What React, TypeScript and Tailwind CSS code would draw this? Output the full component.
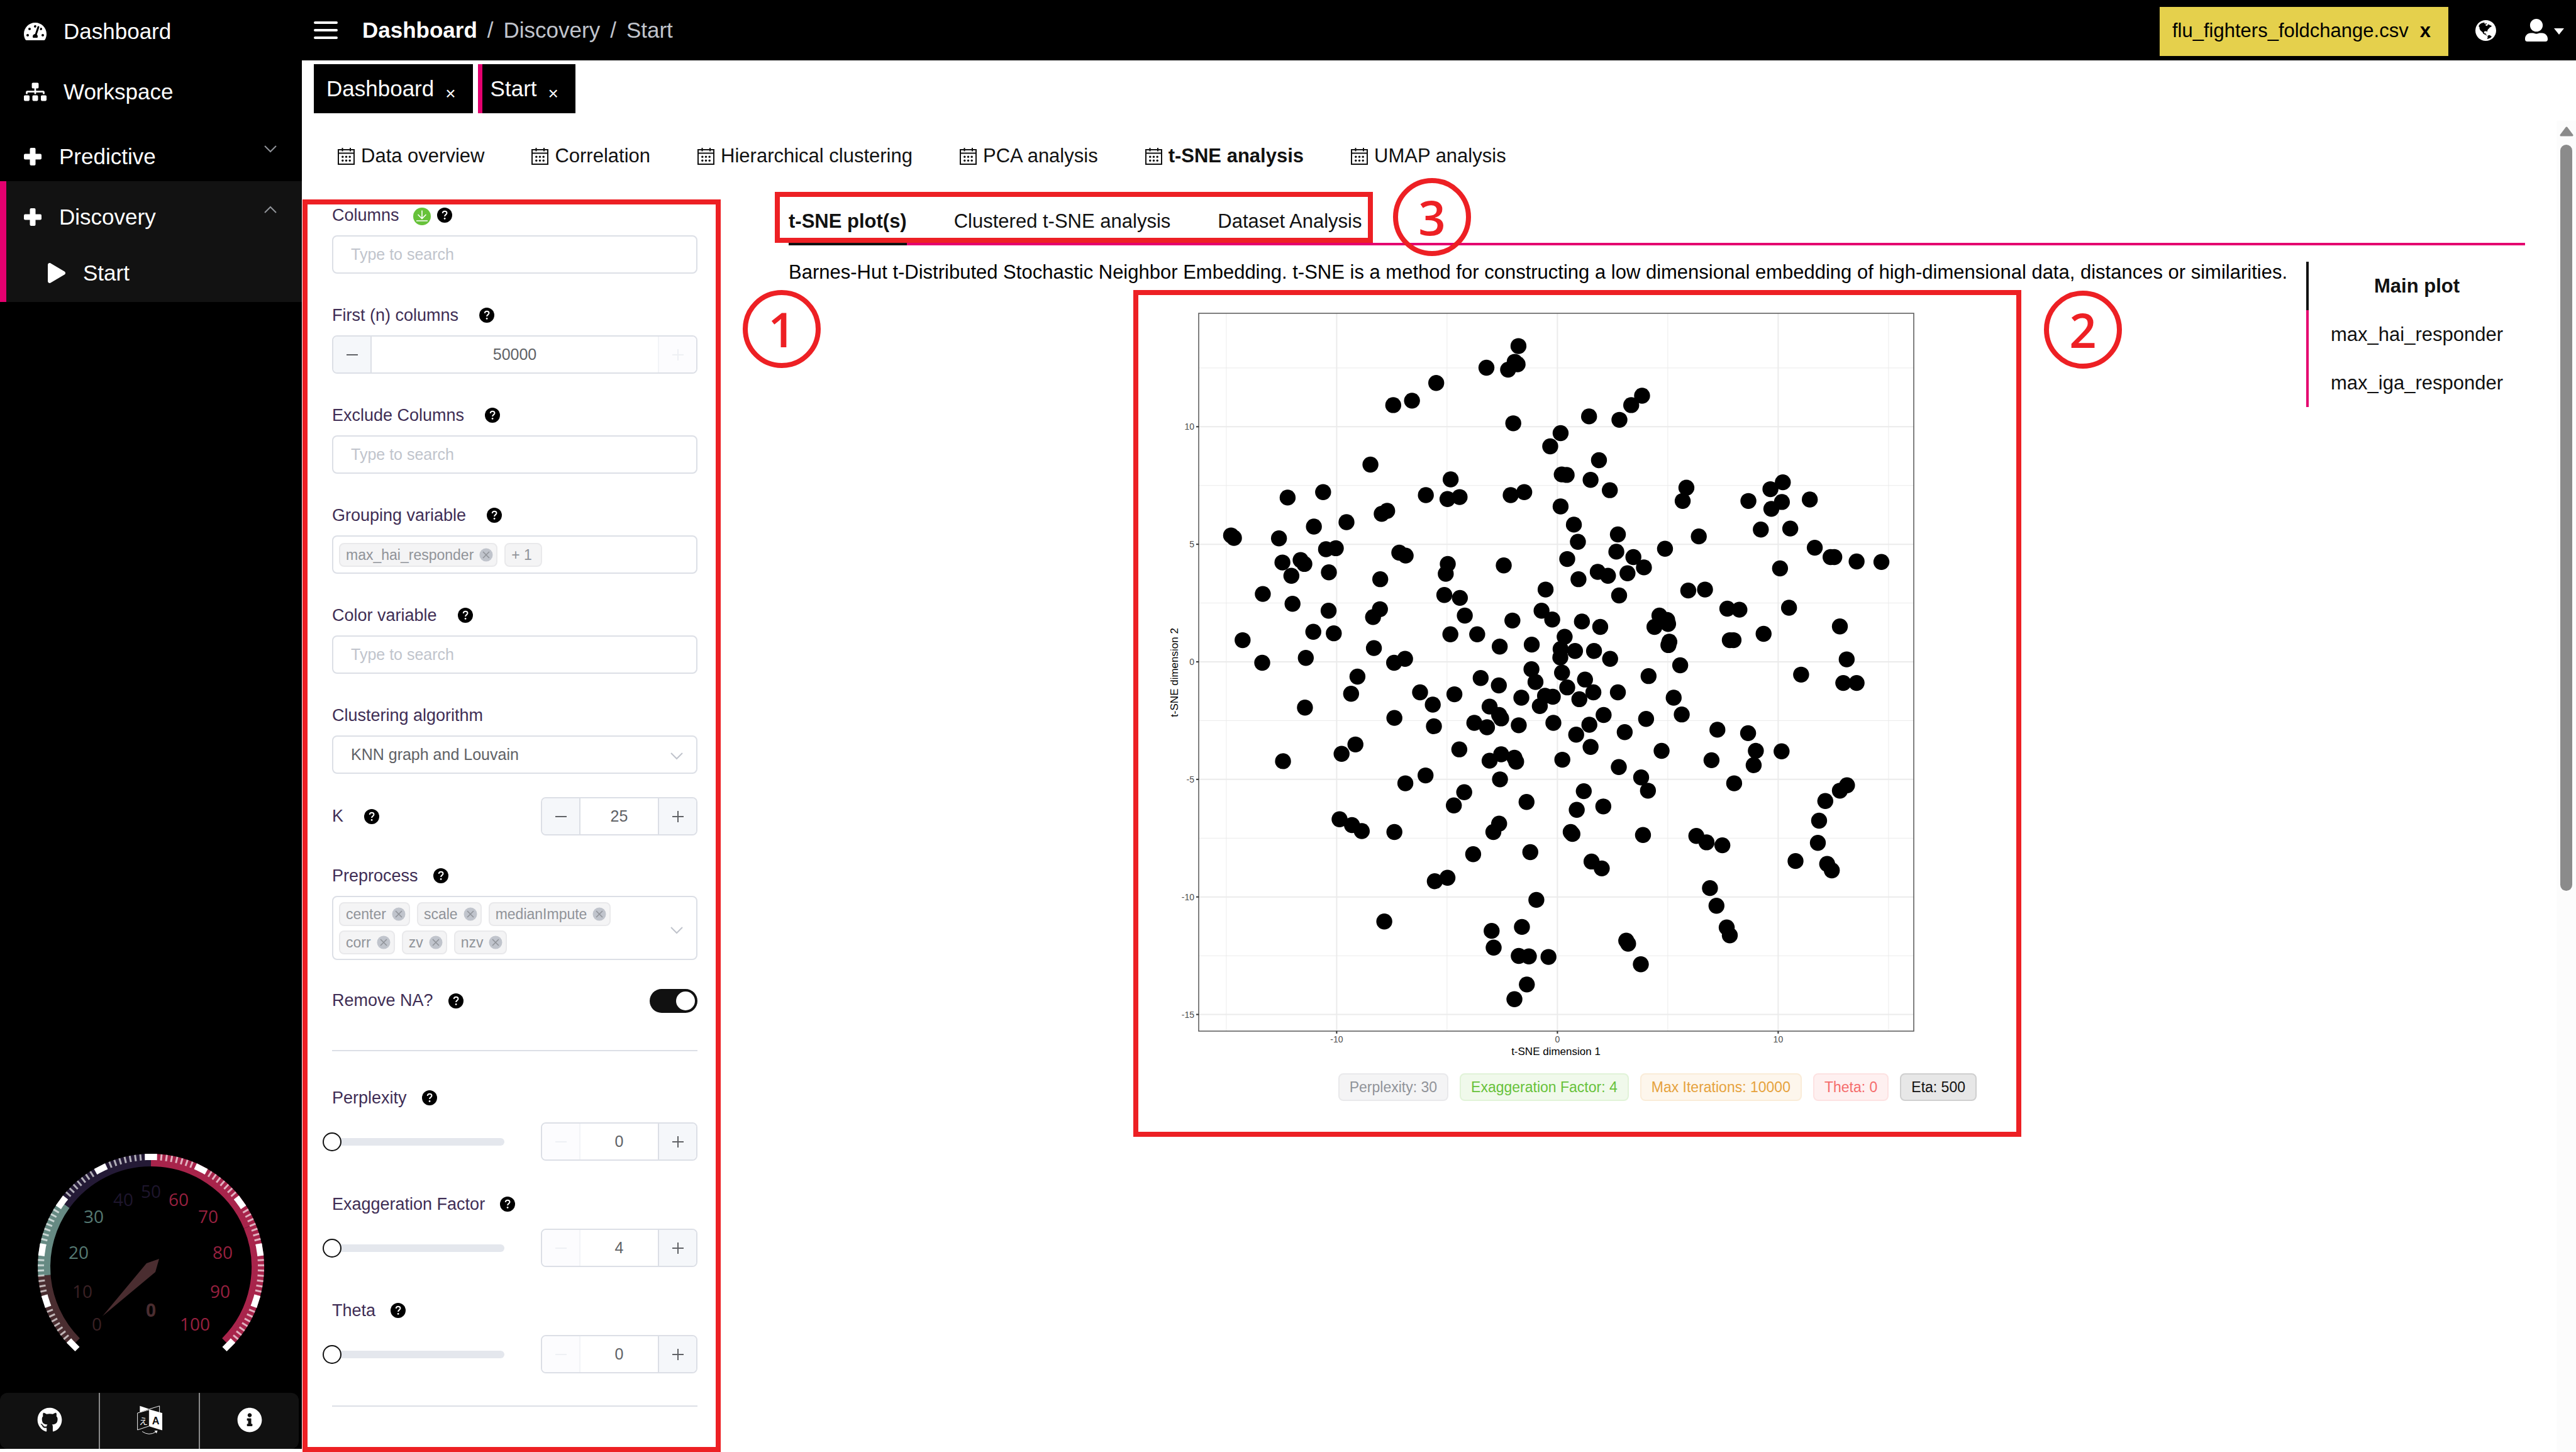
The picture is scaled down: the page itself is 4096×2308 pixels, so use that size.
import React, { useState } from "react";
import { FaTachometerAlt, FaSitemap, FaPlay, FaGithub, FaInfoCircle, FaUserAlt } from "react-icons/fa";

/* ---------- icons ---------- */

function CalendarIcon() {
  return (
    <svg viewBox="0 0 27 27" className="h-[27px] w-[27px] shrink-0" fill="none" stroke="#111111" strokeWidth="2">
      <path d="M1 3H26V26H1Z" />
      <path d="M1 8.5H26" />
      <path d="M7.5 0V5.5M20 0V5.5" />
      <g fill="#111111" stroke="none">
        <circle cx="7.8" cy="14.3" r="1.7" />
        <circle cx="13.5" cy="14.3" r="1.7" />
        <circle cx="19.2" cy="14.3" r="1.7" />
        <circle cx="7.8" cy="20.2" r="1.7" />
        <circle cx="13.5" cy="20.2" r="1.7" />
        <circle cx="19.2" cy="20.2" r="1.7" />
      </g>
    </svg>
  );
}

function PlusIcon() {
  return (
    <svg viewBox="0 0 28 28" className="h-7 w-7 shrink-0" fill="#fff">
      <rect x="0" y="9.5" width="28" height="9" rx="2" />
      <rect x="9.5" y="0" width="9" height="28" rx="2" />
    </svg>
  );
}

function HelpIcon() {
  return (
    <svg viewBox="0 0 24 24" className="h-6 w-6 shrink-0" role="img" aria-label="Help">
      <circle cx="12" cy="12" r="12" fill="#000" />
      <path d="M8.7 8.9C8.9 6.9 10.2 5.7 12.1 5.7C14.1 5.7 15.5 6.9 15.5 8.7C15.5 11.1 12.1 11.2 12.1 14" fill="none" stroke="#fff" strokeWidth="2" />
      <circle cx="12.1" cy="17.4" r="1.4" fill="#fff" />
    </svg>
  );
}

function DownloadIcon() {
  return (
    <svg viewBox="0 0 28 28" className="h-7 w-7" fill="none" stroke="#fff" strokeWidth="1.6">
      <circle cx="14" cy="14" r="14" fill="#67c23a" stroke="none" />
      <path d="M14 4.500V17.500M7.500 11L14 17.500L20.500 11M5 21H23" />
    </svg>
  );
}

function GlobeIcon() {
  return (
    <svg viewBox="69 74 188 188" className="h-[33px] w-[33px]">
      <circle cx="163" cy="168" r="94" fill="#fff" />
      <path d="M98 128L108 112L122 102L136 98L148 95L155 102L150 105L158 109L165 101L172 104L168 112L158 116L165 124L176 126L182 114L190 112L200 120L215 124L214 134L200 140L192 150L182 160L178 170L174 182L170 174L152 175L147 181L148 191L156 195L164 192L162 202L170 206L171 215L162 208L150 202L140 196L136 186L126 176L114 166L107 152L106 138Z" fill="#000" />
      <path d="M182 214L198 210L217 222L206 235L190 240L180 245L176 240L182 228L178 220Z" fill="#000" />
    </svg>
  );
}

function TranslateIcon() {
  return (
    <svg viewBox="0 0 128 146" className="h-[46px] w-10" fill="none" stroke="#fff" strokeWidth="3">
      <path d="M14 2L62 18L14 34Z" fill="#fff" stroke="none" />
      <path d="M62 18L114 2V36" />
      <path d="M2 38L62 21V104L2 124Z" />
      <path d="M62 19L128 38V126L62 106Z" fill="#fff" stroke="none" />
      <text x="76" y="95" fontFamily="Liberation Sans, sans-serif" fontWeight="700" fontSize="52" fill="#111111" stroke="none">A</text>
      <text x="10" y="95" fontFamily="Noto Sans CJK JP, sans-serif" fontSize="44" fill="#fff" stroke="none">え</text>
      <path d="M26 132Q60 156 96 134" />
      <path d="M88 128L104 127L99 142Z" fill="#fff" stroke="none" />
    </svg>
  );
}

function Chevron({ up = false, className }: { up?: boolean; className: string }) {
  return (
    <svg viewBox="0 0 20 12" className={className} fill="none" stroke="currentColor" strokeWidth="2">
      <path d={up ? "M1 11L10 2L19 11" : "M1 1L10 10L19 1"} />
    </svg>
  );
}

/* ---------- sidebar ---------- */

function polar(r: number, value: number) {
  const a = ((225 - value * 2.7) * Math.PI) / 180;
  return [240 + r * Math.cos(a), 200 - r * Math.sin(a)];
}

function arc(from: number, to: number) {
  const [x1, y1] = polar(170, from);
  const [x2, y2] = polar(170, to);
  return `M${x1} ${y1}A170 170 0 0 1 ${x2} ${y2}`;
}

function tick(value: number) {
  const [x1, y1] = polar(170, value);
  const [x2, y2] = polar(180, value);
  return `M${x1} ${y1}L${x2} ${y2}`;
}

const gaugeLabels: [string, number, number, string][] = [
  ["0", 154, 291, "#3a2124"],
  ["10", 131, 239, "#3a2124"],
  ["20", 125, 177, "#567a73"],
  ["30", 149, 120, "#567a73"],
  ["40", 196, 93, "#1e162d"],
  ["50", 240, 80, "#1e162d"],
  ["60", 284, 93, "#97203f"],
  ["70", 331, 120, "#97203f"],
  ["80", 354, 177, "#97203f"],
  ["90", 350, 239, "#97203f"],
  ["100", 310, 291, "#97203f"],
];

function Gauge() {
  const minor = Array.from({ length: 101 }, (_, i) => i).filter((i) => i % 10 !== 0);
  const major = Array.from({ length: 11 }, (_, i) => i * 10);
  return (
    <svg viewBox="0 0 480 400" className="h-[400px] w-full" fill="none">
      <g strokeWidth="20">
        <path d={arc(0, 15)} stroke="#4a2d30" />
        <path d={arc(15, 30)} stroke="#668a83" />
        <path d={arc(30, 50)} stroke="#241a36" />
        <path d={arc(50, 75)} stroke="#a8244b" />
        <path d={arc(75, 100)} stroke="#a8244b" />
      </g>
      <path d={minor.map(tick).join("")} stroke="#fff" strokeOpacity="0.65" strokeWidth="3" />
      <path d={major.map(tick).join("")} stroke="#fff" strokeWidth="19" />
      <g fontFamily="Open Sans, sans-serif" fontSize="28" textAnchor="middle">
        {gaugeLabels.map(([t, x, y, c]) => (
          <text key={t} x={x} y={y + 10} fill={c}>{t}</text>
        ))}
        <text x="240" y="279" fill="#4a2d30" fontWeight="700">0</text>
      </g>
      <path d="M163 278L233 194L253 187L247 208Z" fill="#4a2d30" />
    </svg>
  );
}

function Sidebar() {
  return (
    <aside className="mb-[5px] flex w-[480px] shrink-0 flex-col bg-black text-[35px] leading-[40px] text-white">
      <nav aria-label="Primary">
        <a href="#dashboard" className="flex h-24 items-center gap-[27px] pl-[38px] pt-1">
          <FaTachometerAlt className="h-8 w-9" />
          Dashboard
        </a>
        <a href="#workspace" className="flex h-24 items-center gap-[27px] pl-[38px] pt-1">
          <FaSitemap className="h-8 w-9" />
          Workspace
        </a>
        <a href="#predictive" className="flex h-24 items-center gap-7 pl-[38px] pr-10 pt-[18px]">
          <PlusIcon />
          <span className="flex-1">Predictive</span>
          <Chevron className="mb-6 h-3 w-5 text-[#909399]" />
        </a>
        <div className="bg-[#121212] shadow-[inset_10px_0_0_#e4006f]">
          <a href="#discovery" className="flex h-24 items-center gap-7 pl-[38px] pr-10 pt-[18px]">
            <PlusIcon />
            <span className="flex-1">Discovery</span>
            <Chevron up className="mb-6 h-3 w-5 text-[#909399]" />
          </a>
          <a href="#start" className="flex h-24 items-center gap-7 pl-[76px] pt-1">
            <FaPlay className="h-8 w-7" />
            Start
          </a>
        </div>
      </nav>
      <div className="mt-auto">
        <Gauge />
        <div className="mr-[5px] flex h-[89px] divide-x-2 divide-[#8a8a8a] rounded-xl bg-[#111111]">
          <a href="#github" aria-label="GitHub" className="flex flex-1 items-center justify-center pb-1"><FaGithub className="h-10 w-10" /></a>
          <a href="#language" aria-label="Language" className="flex flex-1 items-center justify-center pb-1"><TranslateIcon /></a>
          <a href="#about" aria-label="About" className="flex flex-1 items-center justify-center pb-1"><FaInfoCircle className="h-10 w-10" /></a>
        </div>
      </div>
    </aside>
  );
}

/* ---------- header ---------- */

function Header() {
  return (
    <header className="flex h-24 items-center bg-black pl-[19px] pr-[19px]">
      <button aria-label="Toggle menu" className="flex w-[38px] flex-col gap-2">
        <span className="h-1 rounded-sm bg-white" />
        <span className="h-1 rounded-sm bg-white" />
        <span className="h-1 rounded-sm bg-white" />
      </button>
      <nav aria-label="Breadcrumb" className="ml-[39px] flex gap-4 text-[35px] leading-[40px] text-[#c0c4cc]">
        <a href="#dashboard" className="font-bold text-white">Dashboard</a>
        <span>/</span>
        <span>Discovery</span>
        <span>/</span>
        <span>Start</span>
      </nav>
      <div className="ml-auto mt-[3px] flex h-[78px] w-[459px] items-center justify-between bg-[#e5d04c] pl-5 pr-7 text-[31px] text-black">
        <span>flu_fighters_foldchange.csv</span>
        <button aria-label="Unload file" className="font-bold">x</button>
      </div>
      <button aria-label="Region" className="ml-[43px]"><GlobeIcon /></button>
      <button aria-label="Account" className="ml-[46px] flex items-center gap-[10px] text-white">
        <FaUserAlt className="h-[38px] w-9" />
        <svg viewBox="0 0 16 10" className="mt-1 h-[10px] w-4"><path d="M0 0H16L8 10Z" fill="#fff" /></svg>
      </button>
    </header>
  );
}

function PageTabs() {
  return (
    <div className="flex h-24 items-start gap-2 px-[19px] pt-[6px] text-[35px] leading-[40px] text-white">
      <div className="flex h-[78px] items-center gap-[18px] bg-black pl-5 pr-[27px]">
        <button>Dashboard</button>
        <button aria-label="Close Dashboard" className="pt-4 text-[28px]">×</button>
      </div>
      <div className="flex h-[78px] items-center gap-[18px] border-l-[7px] border-[#e4006f] bg-black pl-[13px] pr-[27px]">
        <button>Start</button>
        <button aria-label="Close Start" className="pt-4 text-[28px]">×</button>
      </div>
    </div>
  );
}

const analyses = ["Data overview", "Correlation", "Hierarchical clustering", "PCA analysis", "t-SNE analysis", "UMAP analysis"];

function AnalysisNav() {
  return (
    <nav aria-label="Analyses" className="flex h-[110px] items-center gap-[75px] pl-[57px] pt-[2px] text-[31px] text-[#111111]">
      {analyses.map((name) => (
        <button key={name} className={name === "t-SNE analysis" ? "flex items-center gap-[10px] font-bold" : "flex items-center gap-[10px]"}>
          <CalendarIcon />
          {name}
        </button>
      ))}
    </nav>
  );
}

/* ---------- settings form ---------- */

function FieldLabel({ id, children, help = "far", download = false }: { id: string; children: string; help?: "far" | "near" | "none"; download?: boolean }) {
  return (
    <div className="flex h-[34px] items-center text-[27px] text-[#402e55]">
      <label htmlFor={id}>{children}</label>
      {download && (
        <button type="button" aria-label="Fill columns" className="ml-[22px] mr-[10px] pt-[3px]"><DownloadIcon /></button>
      )}
      {help !== "none" && !download && <span className={help === "far" ? "ml-[33px]" : "ml-6"}><HelpIcon /></span>}
      {download && <HelpIcon />}
    </div>
  );
}

function SearchBox({ id }: { id: string }) {
  return (
    <input id={id} type="text" placeholder="Type to search" className="h-[61px] w-full rounded-lg border-2 border-[#dcdfe6] bg-white px-7 text-[25px] text-[#606266] placeholder:text-[#c0c4cc]" />
  );
}

function Stepper({ id, initial, small = false, atMin = false, atMax = false }: { id: string; initial: number; small?: boolean; atMin?: boolean; atMax?: boolean }) {
  const [value, setValue] = useState(initial);
  return (
    <div className={small ? "flex h-[61px] w-[249px] overflow-hidden rounded-lg border-2 border-[#dcdfe6]" : "flex h-[61px] w-full overflow-hidden rounded-lg border-2 border-[#dcdfe6]"}>
      <button type="button" aria-label="Decrease" disabled={atMin} onClick={() => setValue(value - 1)} className="flex w-[61px] shrink-0 items-center justify-center border-r-2 border-[#dcdfe6] bg-[#f5f7fa] text-[#606266] disabled:border-[#f2f4f7] disabled:bg-[#fcfcfe] disabled:text-[#eef0f4]">
        <svg viewBox="0 0 18 18" className="h-[18px] w-[18px]" stroke="currentColor" strokeWidth="2"><path d="M0 9H18" /></svg>
      </button>
      <input id={id} type="number" value={value} onChange={(e) => setValue(Number(e.target.value))} className="w-full min-w-0 flex-1 bg-white text-center text-[25px] text-[#606266] [appearance:textfield] [&::-webkit-inner-spin-button]:appearance-none [&::-webkit-outer-spin-button]:appearance-none" />
      <button type="button" aria-label="Increase" disabled={atMax} onClick={() => setValue(value + 1)} className="flex w-[61px] shrink-0 items-center justify-center border-l-2 border-[#dcdfe6] bg-[#f5f7fa] text-[#606266] disabled:border-[#f2f4f7] disabled:bg-[#fcfcfe] disabled:text-[#eef0f4]">
        <svg viewBox="0 0 18 18" className="h-[18px] w-[18px]" stroke="currentColor" strokeWidth="2"><path d="M0 9H18M9 0V18" /></svg>
      </button>
    </div>
  );
}

function Tag({ children, closable = true }: { children: string; closable?: boolean }) {
  return (
    <span className="flex h-[38px] items-center gap-[9px] rounded-lg border-2 border-[#e9e9eb] bg-[#f4f4f5] pl-[9px] pr-[5px] text-[23px] leading-[34px] text-[#909399]">
      {children}
      {closable ? (
        <button type="button" aria-label={`Remove ${children}`}>
          <svg viewBox="0 0 22 22" className="h-[22px] w-[22px]" stroke="#909399" strokeWidth="1.500">
            <circle cx="11" cy="11" r="10.500" fill="#c0c4cc" stroke="none" />
            <path d="M6 6L16 16M16 6L6 16" />
          </svg>
        </button>
      ) : (
        <span className="w-0" />
      )}
    </span>
  );
}

function SliderField({ id, label, initial }: { id: string; label: string; initial: number }) {
  return (
    <div className="flex flex-col gap-[22px]">
      <FieldLabel id={id} help="near">{label}</FieldLabel>
      <div className="flex items-center justify-between">
        <div className="grid w-[274px] items-center">
          <div className="col-start-1 row-start-1 h-3 rounded-full bg-[#e4e7ed]" />
          <input type="range" min={initial} max={100} defaultValue={initial} aria-label={`${label} slider`} className="relative col-start-1 row-start-1 -mx-[15px] h-[30px] w-[304px] appearance-none bg-transparent [&::-webkit-slider-thumb]:h-[30px] [&::-webkit-slider-thumb]:w-[30px] [&::-webkit-slider-thumb]:appearance-none [&::-webkit-slider-thumb]:rounded-full [&::-webkit-slider-thumb]:border-2 [&::-webkit-slider-thumb]:border-solid [&::-webkit-slider-thumb]:border-[#111111] [&::-webkit-slider-thumb]:bg-white" />
        </div>
        <Stepper id={id} initial={initial} small atMin />
      </div>
    </div>
  );
}

function Callout({ n, className }: { n: string; className: string }) {
  return (
    <span className={`absolute flex h-[124px] w-[124px] items-center justify-center rounded-full border-8 border-[#ed2024] font-['Open_Sans'] text-[76px] leading-none font-semibold text-[#ed2024] ${className}`}>
      {n}
    </span>
  );
}

function SettingsForm() {
  return (
    <form className="relative mt-[15px] ml-[1px] flex w-[665px] shrink-0 flex-col border-8 border-[#ed2024] bg-white pb-[63px] pl-[39px] pr-[29px]">
      <div className="flex flex-col gap-[49px]">
        <div className="flex flex-col gap-[15px]">
          <FieldLabel id="columns" download>Columns</FieldLabel>
          <SearchBox id="columns" />
        </div>
        <div className="flex flex-col gap-[15px]">
          <FieldLabel id="first-n">First (n) columns</FieldLabel>
          <Stepper id="first-n" initial={50000} atMax />
        </div>
        <div className="flex flex-col gap-[15px]">
          <FieldLabel id="exclude">Exclude Columns</FieldLabel>
          <SearchBox id="exclude" />
        </div>
        <div className="flex flex-col gap-[15px]">
          <FieldLabel id="grouping">Grouping variable</FieldLabel>
          <div className="flex h-[61px] items-center gap-[11px] rounded-lg border-2 border-[#dcdfe6] px-[9px]">
            <Tag>max_hai_responder</Tag>
            <Tag closable={false}>+ 1</Tag>
            <input id="grouping" type="text" className="min-w-0 flex-1 text-[25px] outline-none" />
          </div>
        </div>
        <div className="flex flex-col gap-[15px]">
          <FieldLabel id="color">Color variable</FieldLabel>
          <SearchBox id="color" />
        </div>
        <div className="flex flex-col gap-[15px]">
          <FieldLabel id="algorithm" help="none">Clustering algorithm</FieldLabel>
          <div className="relative">
            <select id="algorithm" className="h-[61px] w-full appearance-none rounded-lg border-2 border-[#dcdfe6] bg-white px-7 text-[25px] text-[#606266]">
              <option>KNN graph and Louvain</option>
            </select>
            <Chevron className="pointer-events-none absolute right-[23px] top-[27px] h-3 w-5 text-[#c0c4cc]" />
          </div>
        </div>
      </div>

      <div className="mt-[37px] flex items-center justify-between">
        <FieldLabel id="k">K</FieldLabel>
        <Stepper id="k" initial={25} small />
      </div>

      <div className="mt-[47px] flex flex-col gap-[15px]">
        <FieldLabel id="preprocess" help="near">Preprocess</FieldLabel>
        <div className="flex h-[102px] items-center rounded-lg border-2 border-[#dcdfe6] pl-[9px] pr-[21px]">
          <div className="flex flex-1 flex-col gap-[7px]">
            <div className="flex gap-[11px]">
              <Tag>center</Tag>
              <Tag>scale</Tag>
              <Tag>medianImpute</Tag>
            </div>
            <div className="flex gap-[11px]">
              <Tag>corr</Tag>
              <Tag>zv</Tag>
              <Tag>nzv</Tag>
              <input id="preprocess" type="text" className="min-w-0 flex-1 outline-none" />
            </div>
          </div>
          <Chevron className="mt-2 h-3 w-5 text-[#c0c4cc]" />
        </div>
      </div>

      <div className="mt-[45px] flex h-[39px] items-center justify-between">
        <FieldLabel id="remove-na" help="near">Remove NA?</FieldLabel>
        <input id="remove-na" type="checkbox" role="switch" defaultChecked className="flex h-[38px] w-[76px] appearance-none items-center rounded-full bg-[#c0c4cc] px-1 before:h-[30px] before:w-[30px] before:rounded-full before:bg-white before:content-[''] checked:justify-end checked:bg-[#111111]" />
      </div>

      <hr className="mt-[59px] border-t-2 border-[#dcdfe6]" />
      <div className="mt-[57px] flex flex-col gap-[52px]">
        <SliderField id="perplexity" label="Perplexity" initial={0} />
        <SliderField id="exaggeration" label="Exaggeration Factor" initial={4} />
        <SliderField id="theta" label="Theta" initial={0} />
      </div>
      <hr className="mt-[51px] border-t-2 border-[#dcdfe6]" />

      <Callout n="1" className="left-[692px] top-[136px]" />
    </form>
  );
}

/* ---------- plot ---------- */

type Cluster = { zero: number; unit: number; points: [number, number][] };

/* Digitised samples; `zero` and `unit` calibrate the horizontal axis of each half. */
const west: Cluster = {
  zero: 1470,
  unit: 76.5,
  points: [
    [1335, 117], [1322, 149], [1332, 154], [1299, 165], [1224, 161], [1050, 192], [966, 228], [901, 237], [1317, 274], [1481, 294],
    [1445, 321], [822, 358], [535, 425], [658, 414], [626, 484], [739, 475], [505, 508], [668, 530], [702, 528], [517, 557],
    [580, 552], [593, 560], [548, 584], [678, 577], [449, 621], [552, 641], [677, 655], [624, 698], [695, 701], [379, 715],
    [598, 751], [447, 761], [339, 502], [349, 507], [595, 852], [519, 961], [755, 824], [777, 789], [834, 731], [831, 668],
    [855, 652], [856, 591], [861, 458], [880, 452], [922, 537], [944, 543], [1014, 420], [1089, 428], [1131, 424], [1100, 388],
    [1308, 420], [1355, 414], [1485, 378], [1502, 379], [1481, 443], [1527, 480], [1541, 515], [1504, 550], [1543, 591], [1284, 563],
    [1090, 560], [1083, 580], [1078, 623], [1132, 629], [1149, 665], [1099, 703], [1192, 703], [1314, 675], [1429, 612], [1415, 655],
    [1452, 673], [1270, 728], [1381, 724], [1495, 708], [1481, 733], [1480, 750], [1531, 737], [1486, 781], [1504, 811], [1380, 774],
    [1394, 800], [1427, 828], [1454, 830], [1409, 849], [1456, 883], [1546, 835], [1535, 907], [1487, 958], [904, 761], [942, 753],
    [905, 873], [994, 821], [1038, 846], [1042, 890], [1113, 825], [1204, 792], [1267, 807], [1345, 832], [1235, 850], [1268, 867],
    [1275, 874], [1182, 883], [1226, 892], [1336, 888], [1130, 937], [1235, 960], [1275, 947], [1321, 954], [1327, 962], [1271, 998],
    [770, 927], [722, 946], [943, 1006], [1013, 990], [1147, 1024], [1111, 1051], [1363, 1044], [1537, 1060], [1516, 1105], [1522, 1109],
    [715, 1079], [758, 1091], [792, 1103], [905, 1105], [1248, 1105], [1268, 1088], [1178, 1150], [1376, 1146], [1045, 1205], [1089, 1198],
    [1397, 1243], [870, 1287], [1242, 1306], [1249, 1340], [1347, 1298], [1336, 1357], [1371, 1358], [1439, 1359], [1364, 1415], [1321, 1445],
  ],
};

const east: Cluster = {
  zero: 50,
  unit: 71.2,
  points: [
    [323, 218], [288, 237], [250, 267], [152, 260], [184, 349], [157, 389], [219, 410], [245, 500], [240, 535], [295, 546],
    [329, 567], [276, 579], [180, 576], [213, 584], [249, 624], [397, 529], [466, 405], [454, 432], [506, 504], [472, 614],
    [526, 612], [666, 432], [737, 408], [777, 394], [740, 448], [774, 434], [864, 429], [706, 490], [801, 488], [880, 527],
    [931, 546], [943, 546], [1015, 555], [1095, 556], [768, 569], [797, 649], [598, 651], [637, 653], [606, 715], [618, 715],
    [715, 702], [961, 687], [983, 754], [836, 785], [972, 802], [1015, 802], [129, 677], [188, 688], [379, 665], [404, 674],
    [407, 682], [363, 688], [411, 718], [408, 725], [168, 737], [220, 753], [446, 766], [344, 788], [139, 795], [166, 821],
    [245, 821], [425, 832], [451, 866], [199, 867], [153, 887], [336, 875], [267, 902], [157, 932], [386, 940], [248, 973],
    [320, 994], [342, 1021], [547, 959], [566, 897], [665, 904], [690, 940], [683, 969], [773, 941], [620, 1006], [135, 1022],
    [198, 1053], [326, 1111], [160, 1165], [193, 1179], [498, 1113], [531, 1126], [582, 1132], [961, 1021], [984, 1010], [914, 1042],
    [894, 1082], [890, 1127], [818, 1164], [920, 1170], [935, 1183], [542, 1219], [563, 1255], [596, 1299], [606, 1315], [272, 1326],
    [278, 1332], [319, 1374],
  ],
};

const plotX = (v: number) => 626.4 + v * 35.1;
const plotY = (v: number) => 567 - v * 37.37;

function Scatter() {
  const dots = [west, east].flatMap((c) => c.points.map(([x, y]) => [plotX((x - c.zero) / c.unit), plotY((759 - y) / 47.8)]));
  return (
    <svg viewBox="0 0 1200 1200" className="h-[1200px] w-[1200px]" role="img" aria-label="t-SNE scatter plot" fontFamily="Liberation Sans, sans-serif">
      <g stroke="#ebebeb" strokeWidth="1">
        {[-15, -5, 5, 15].map((v) => <path key={v} d={`M${plotX(v)} 13V1154`} />)}
        {[12.5, 7.5, 2.5, -2.5, -7.5, -12.5].map((v) => <path key={v} d={`M56 ${plotY(v)}H1193`} />)}
      </g>
      <g stroke="#ebebeb" strokeWidth="2">
        {[-10, 0, 10].map((v) => <path key={v} d={`M${plotX(v)} 13V1154`} />)}
        {[10, 5, 0, -5, -10, -15].map((v) => <path key={v} d={`M56 ${plotY(v)}H1193`} />)}
      </g>
      {dots.map(([x, y], i) => <circle key={i} cx={x} cy={y} r="12.700" />)}
      <rect x="56" y="13" width="1137" height="1141" fill="none" stroke="#555555" strokeWidth="1.500" />
      <g stroke="#333333" strokeWidth="2">
        {[10, 5, 0, -5, -10, -15].map((v) => <path key={v} d={`M52 ${plotY(v)}H56`} />)}
        {[-10, 0, 10].map((v) => <path key={v} d={`M${plotX(v)} 1154V1158`} />)}
      </g>
      <g fontSize="14" fill="#4d4d4d">
        {[10, 5, 0, -5, -10, -15].map((v) => <text key={v} x="49" y={plotY(v) + 5} textAnchor="end">{v}</text>)}
        {[-10, 0, 10].map((v) => <text key={v} x={plotX(v)} y="1172" textAnchor="middle">{v}</text>)}
      </g>
      <g fontSize="17" textAnchor="middle">
        <text x="624" y="1192">t-SNE dimension 1</text>
        <text transform="translate(23 584) rotate(-90)">t-SNE dimension 2</text>
      </g>
    </svg>
  );
}

const params: [string, string][] = [
  ["Perplexity: 30", "border-[#e9e9eb] bg-[#f4f4f5] text-[#909399]"],
  ["Exaggeration Factor: 4", "border-[#e1f3d8] bg-[#f0f9eb] text-[#67c23a]"],
  ["Max Iterations: 10000", "border-[#faecd8] bg-[#fdf6ec] text-[#e6a23c]"],
  ["Theta: 0", "border-[#fde2e2] bg-[#fef0f0] text-[#f56c6c]"],
  ["Eta: 500", "border-[#cfcfcf] bg-[#e7e7e7] text-[#111111]"],
];

function Results() {
  return (
    <section className="mt-[15px] min-w-0 flex-1 pl-[108px] pr-[50px] text-[31px] leading-9 text-[#111111]">
      <nav aria-label="t-SNE views" className="border-b-4 border-[#e4006f]">
        <div className="relative flex w-fit gap-[75px]">
          <button className="-mb-1 h-[73px] border-b-4 border-[#111111] font-bold">t-SNE plot(s)</button>
          <button className="h-[69px]">Clustered t-SNE analysis</button>
          <button className="h-[69px]">Dataset Analysis</button>
          <span className="pointer-events-none absolute -left-[22px] -right-[18px] -top-3 bottom-0 border-8 border-[#ed2024]" />
          <Callout n="3" className="left-[961px] -top-[34px]" />
        </div>
      </nav>
      <div className="flex">
        <div className="min-w-0 flex-1 pt-[25px]">
          <p className="whitespace-nowrap text-black">
            Barnes-Hut t-Distributed Stochastic Neighbor Embedding. t-SNE is a method for constructing a low dimensional embedding of high-dimensional data, distances or similarities.
          </p>
          <figure className="relative ml-[596px] mt-[34px] w-[1293px]">
            <Scatter />
            <figcaption className="mt-[21px] flex justify-end gap-[18px]">
              {params.map(([text, tone]) => (
                <span key={text} className={`flex h-11 items-center rounded-lg border-2 px-4 text-[23px] ${tone}`}>{text}</span>
              ))}
            </figcaption>
            <span className="pointer-events-none absolute -bottom-[57px] -left-[48px] -right-[71px] -top-6 border-8 border-[#ed2024]" />
            <Callout n="2" className="left-[1400px] -top-[23px]" />
          </figure>
        </div>
        <div className="mt-[26px] flex w-[348px] shrink-0 flex-col">
          <button className="h-[77px] border-l-4 border-[#111111] font-bold">Main plot</button>
          <button className="h-[77px] border-l-4 border-[#e4006f]">max_hai_responder</button>
          <button className="h-[77px] border-l-4 border-[#e4006f]">max_iga_responder</button>
        </div>
      </div>
    </section>
  );
}

function Scrollbar() {
  return (
    <div className="flex w-[31px] shrink-0 flex-col items-center bg-[#fcfcfc] pt-[9px]">
      <svg viewBox="0 0 22 16" className="h-4 w-[22px]"><path d="M11 2L20 14H2Z" fill="#8b8b8b" stroke="#8b8b8b" strokeWidth="3" strokeLinejoin="round" /></svg>
      <div className="mt-[13px] h-[1186px] w-[19px] rounded-full bg-[#8b8b8b]" />
    </div>
  );
}

export default function App() {
  return (
    <div className="flex min-h-screen bg-white font-['Liberation_Sans',Arial,sans-serif]">
      <Sidebar />
      <main className="flex min-w-0 flex-1 flex-col">
        <Header />
        <PageTabs />
        <div className="flex flex-1">
          <div className="flex min-w-0 flex-1 flex-col">
            <AnalysisNav />
            <div className="flex flex-1">
              <SettingsForm />
              <Results />
            </div>
          </div>
          <Scrollbar />
        </div>
      </main>
    </div>
  );
}
